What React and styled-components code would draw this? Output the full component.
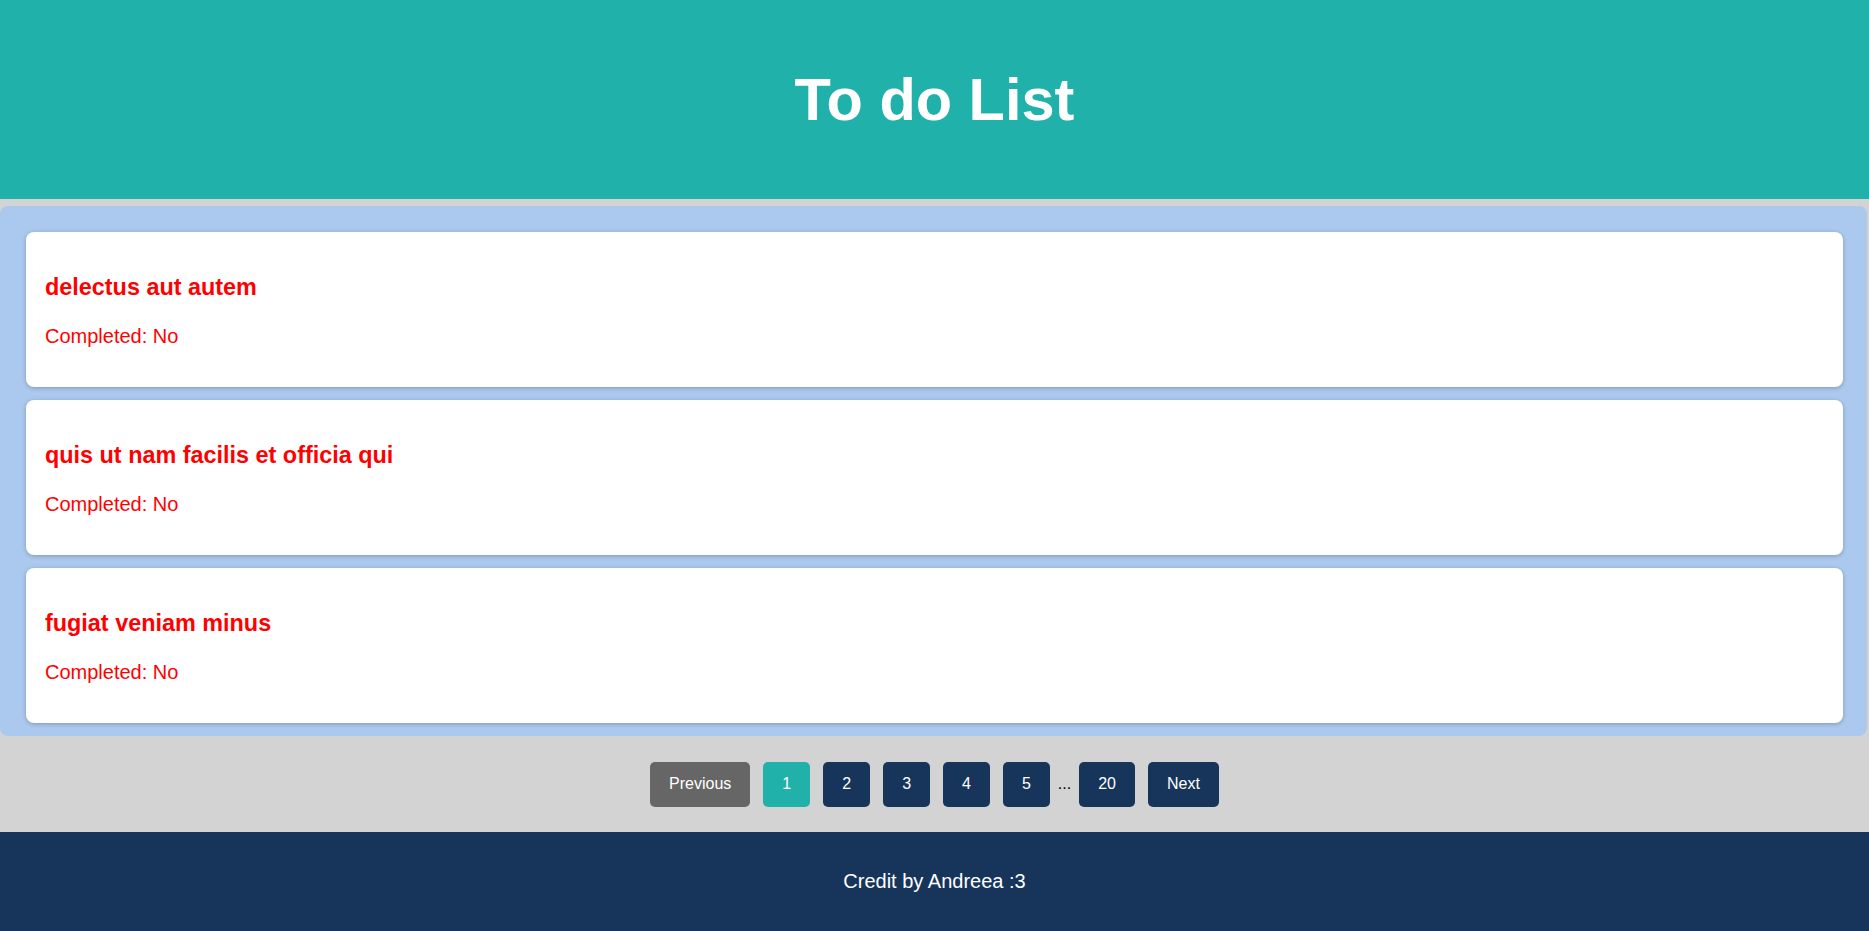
import React from 'react'
import styled, { createGlobalStyle } from 'styled-components'

const GlobalStyle = createGlobalStyle`
  body {
    margin: 0;
    background-color: #d3d3d3;
    font-family: "Liberation Sans", Arial, sans-serif;
    font-size: 20px;
  }
`

const Header = styled.header`
  height: 199px;
  background-color: #20b2aa;
  display: flex;
  align-items: center;
  justify-content: center;
`

const Title = styled.h1`
  margin: 0;
  color: #fff;
  font-size: 59.5px;
  font-weight: bold;
`

const ListContainer = styled.div`
  margin: 7px 2px 0 0;
  padding: 26px 24px 13px 26px;
  background-color: #abc9ee;
  border-radius: 8px;
  display: flex;
  flex-direction: column;
  gap: 13px;
`

const TodoCard = styled.div`
  height: 155px;
  box-sizing: border-box;
  padding: 3px 19px 0;
  background-color: #fff;
  border-radius: 8px;
  box-shadow: 0 1px 4px rgba(0, 0, 0, 0.25);
  display: flex;
  flex-direction: column;
  justify-content: center;
  color: #ff0000;
`

const TodoTitle = styled.h3`
  margin: 0 0 24px;
  font-size: 23.4px;
  font-weight: bold;
`

const TodoStatus = styled.p`
  margin: 0;
  font-size: 20px;
`

const Pagination = styled.nav`
  height: 96px;
  display: flex;
  align-items: center;
  justify-content: center;
  font-size: 16px;
`

const PageButton = styled.button`
  height: 45px;
  margin: 0 6.5px;
  padding: 0 19px;
  border: none;
  border-radius: 5px;
  font-family: inherit;
  font-size: 16px;
  color: #fff;
  background-color: ${p => (p.$active ? '#20b2aa' : p.$muted ? '#666666' : '#17355a')};
  cursor: pointer;
`

const Dots = styled.span`
  margin: 0 1.5px;
  color: #000;
`

const Footer = styled.footer`
  height: 99px;
  background-color: #17355a;
  color: #fff;
  display: flex;
  align-items: center;
  justify-content: center;
  font-size: 20px;
`

const todos = [
  { id: 1, title: 'delectus aut autem', completed: false },
  { id: 2, title: 'quis ut nam facilis et officia qui', completed: false },
  { id: 3, title: 'fugiat veniam minus', completed: false },
]

export default function App() {
  return (
    <>
      <GlobalStyle />
      <Header>
        <Title>To do List</Title>
      </Header>
      <ListContainer>
        {todos.map(todo => (
          <TodoCard key={todo.id}>
            <TodoTitle>{todo.title}</TodoTitle>
            <TodoStatus>Completed: {todo.completed ? 'Yes' : 'No'}</TodoStatus>
          </TodoCard>
        ))}
      </ListContainer>
      <Pagination>
        <PageButton $muted>Previous</PageButton>
        <PageButton $active>1</PageButton>
        <PageButton>2</PageButton>
        <PageButton>3</PageButton>
        <PageButton>4</PageButton>
        <PageButton>5</PageButton>
        <Dots>...</Dots>
        <PageButton>20</PageButton>
        <PageButton>Next</PageButton>
      </Pagination>
      <Footer>Credit by Andreea :3</Footer>
    </>
  )
}
